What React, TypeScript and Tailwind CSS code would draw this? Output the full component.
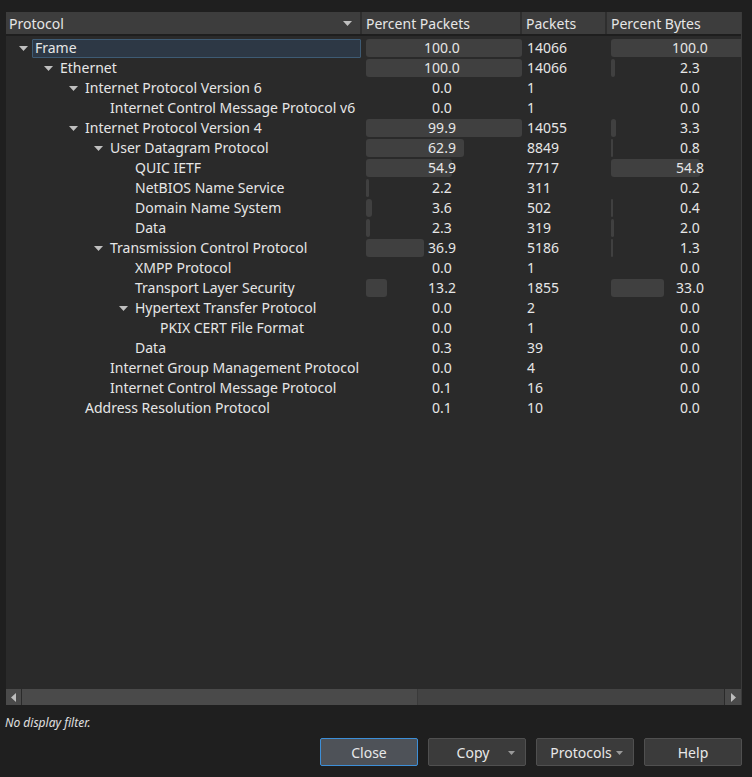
import React from 'react';

type Row = {
  name: string;
  level: number;
  open?: boolean;
  pp: number;
  packets: number;
  pb: number;
};

const rows: Row[] = [
  { name: 'Frame', level: 0, open: true, pp: 100.0, packets: 14066, pb: 100.0 },
  { name: 'Ethernet', level: 1, open: true, pp: 100.0, packets: 14066, pb: 2.3 },
  { name: 'Internet Protocol Version 6', level: 2, open: true, pp: 0.0, packets: 1, pb: 0.0 },
  { name: 'Internet Control Message Protocol v6', level: 3, pp: 0.0, packets: 1, pb: 0.0 },
  { name: 'Internet Protocol Version 4', level: 2, open: true, pp: 99.9, packets: 14055, pb: 3.3 },
  { name: 'User Datagram Protocol', level: 3, open: true, pp: 62.9, packets: 8849, pb: 0.8 },
  { name: 'QUIC IETF', level: 4, pp: 54.9, packets: 7717, pb: 54.8 },
  { name: 'NetBIOS Name Service', level: 4, pp: 2.2, packets: 311, pb: 0.2 },
  { name: 'Domain Name System', level: 4, pp: 3.6, packets: 502, pb: 0.4 },
  { name: 'Data', level: 4, pp: 2.3, packets: 319, pb: 2.0 },
  { name: 'Transmission Control Protocol', level: 3, open: true, pp: 36.9, packets: 5186, pb: 1.3 },
  { name: 'XMPP Protocol', level: 4, pp: 0.0, packets: 1, pb: 0.0 },
  { name: 'Transport Layer Security', level: 4, pp: 13.2, packets: 1855, pb: 33.0 },
  { name: 'Hypertext Transfer Protocol', level: 4, open: true, pp: 0.0, packets: 2, pb: 0.0 },
  { name: 'PKIX CERT File Format', level: 5, pp: 0.0, packets: 1, pb: 0.0 },
  { name: 'Data', level: 4, pp: 0.3, packets: 39, pb: 0.0 },
  { name: 'Internet Group Management Protocol', level: 3, pp: 0.0, packets: 4, pb: 0.0 },
  { name: 'Internet Control Message Protocol', level: 3, pp: 0.1, packets: 16, pb: 0.0 },
  { name: 'Address Resolution Protocol', level: 2, pp: 0.1, packets: 10, pb: 0.0 },
];

const indents = ['pl-[28px]', 'pl-[53px]', 'pl-[78px]', 'pl-[103px]', 'pl-[128px]', 'pl-[153px]'];

const Caret = ({ className = '' }: { className?: string }) => (
  <svg width="9" height="5" viewBox="0 0 9 5" className={className}>
    <polygon points="0,0 9,0 4.5,5" fill="#bfbfbf" />
  </svg>
);

// percent cell: rounded bar behind a centred value
const PercentCell = ({ value, full, width }: { value: number; full: number; width: string }) => {
  const w = Math.round((full * value) / 100);
  return (
    <div className={`relative h-[20px] ${width} shrink-0 flex items-center justify-center`}>
      {w >= 1 && (
        <div
          className="absolute left-[4px] top-[1px] h-[18px] rounded-[3px] bg-[#404040]"
          style={{ width: Math.max(w, 2) }}
        />
      )}
      <span className="relative">{value.toFixed(1)}</span>
    </div>
  );
};

const Button = ({ label, primary, menu }: { label: string; primary?: boolean; menu?: boolean }) => (
  <button
    className={`relative h-[28px] w-[98px] rounded-[2px] border text-[14px] text-[#e8e8e8] flex items-center justify-center ${
      primary ? 'border-[#3d8fd8] bg-[#4e5258]' : 'border-[#505050] bg-[#3b3b3b]'
    }`}
  >
    <span className={menu ? 'pr-[8px]' : ''}>{label}</span>
    {menu && (
      <svg width="7" height="4" viewBox="0 0 7 4" className="absolute right-[10px] top-[12px]">
        <polygon points="0,0 7,0 3.5,4" fill="#9a9a9a" />
      </svg>
    )}
  </button>
);

export default function App() {
  return (
    <div
      className="w-[752px] h-[777px] bg-[#1f1f1f] text-[#e6e6e6] text-[14px] overflow-hidden"
      style={{ fontFamily: '"Noto Sans", "Open Sans", sans-serif' }}
    >
      <div className="h-[12px]" />
      <div className="ml-[6px] w-[736px] h-[693px] bg-[#2a2a2a] flex flex-col overflow-hidden border-r border-[#3a3a3a]">
        {/* Header */}
        <div className="flex h-[24px] bg-[#3d3d3d] border-b-2 border-[#1e1e1e] shrink-0 leading-[23px]">
          <div className="w-[356px] shrink-0 pl-[3px] pr-[8px] flex items-center justify-between border-r-2 border-[#2e2e2e]">
            <span>Protocol</span>
            <Caret />
          </div>
          <div className="w-[160px] shrink-0 pl-[4px] border-r-2 border-[#2e2e2e]">Percent Packets</div>
          <div className="w-[85px] shrink-0 pl-[4px] border-r-2 border-[#2e2e2e]">Packets</div>
          <div className="w-[166px] shrink-0 pl-[4px]">Percent Bytes</div>
        </div>

        {/* Rows */}
        <div className="flex-1 pt-[2px]">
          {rows.map((r, i) => (
            <div key={i} className="flex h-[20px] leading-[20px]">
              <div className="w-[356px] shrink-0 pl-[1px] pr-[1px]">
                <div className={`h-[20px] flex items-center ${indents[r.level]}`}>
                  <div className="w-[19px] shrink-0 flex items-center -ml-[19px] pl-[3px]">
                    {r.open && <Caret />}
                  </div>
                  {i === 0 ? (
                    <div className="flex-1 h-[19px] -ml-[3px] pl-[2px] border border-[#3e5b74] bg-[#2d3845] rounded-[1px] flex items-center">
                      {r.name}
                    </div>
                  ) : (
                    <span className="whitespace-nowrap">{r.name}</span>
                  )}
                </div>
              </div>
              <PercentCell value={r.pp} full={156} width="w-[160px]" />
              <div className="w-[85px] shrink-0 pl-[5px]">{r.packets}</div>
              <PercentCell value={r.pb} full={162} width="w-[166px]" />
            </div>
          ))}
        </div>

        {/* Horizontal scrollbar */}
        <div className="h-[17px] shrink-0 flex bg-[#434343] border-t border-[#2a2a2a]">
          <div className="w-[16px] h-full bg-[#4a4a4a] border-r border-[#2a2a2a] flex items-center justify-center">
            <svg width="5" height="9" viewBox="0 0 5 9">
              <polygon points="5,0 5,9 0,4.5" fill="#bdbdbd" />
            </svg>
          </div>
          <div className="w-[396px] h-full bg-[#4a4a4a] border-r border-[#3a3a3a]" />
          <div className="flex-1" />
          <div className="w-[17px] h-full bg-[#4a4a4a] border-l border-[#2a2a2a] flex items-center justify-center">
            <svg width="5" height="9" viewBox="0 0 5 9">
              <polygon points="0,0 0,9 5,4.5" fill="#bdbdbd" />
            </svg>
          </div>
        </div>
      </div>

      <div className="pl-[5px] pt-[9px] h-[33px] text-[12px] italic text-[#e0e0e0]">No display filter.</div>

      <div className="flex justify-end gap-[10px] pr-[10px]">
        <Button label="Close" primary />
        <Button label="Copy" menu />
        <Button label="Protocols" menu />
        <Button label="Help" />
      </div>
    </div>
  );
}
